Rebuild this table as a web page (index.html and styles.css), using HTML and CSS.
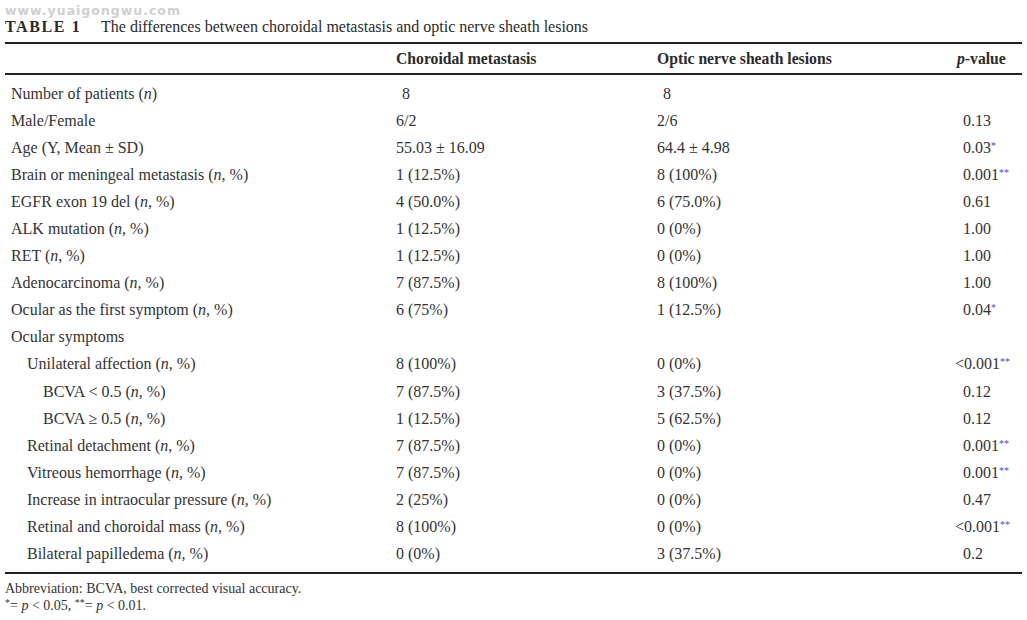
FILE: index.html
```html
<!DOCTYPE html>
<html>
<head>
<meta charset="utf-8">
<link rel="stylesheet" href="styles.css">
</head>
<body>
<div class="page">
  <div class="watermark">www.yuaigongwu.com</div>
  <div class="caption"><span class="label">TABLE 1</span><span class="title">The differences between choroidal metastasis and optic nerve sheath lesions</span></div>
  <table class="data">
    <colgroup>
      <col class="c1"><col class="c2"><col class="c3"><col class="c4">
    </colgroup>
    <thead>
      <tr><th></th><th>Choroidal metastasis</th><th>Optic nerve sheath lesions</th><th class="ph"><i>p</i>-value</th></tr>
    </thead>
    <tbody>
      <tr class="first"><td>Number of patients (<i>n</i>)</td><td><span class="pad">8</span></td><td><span class="pad">8</span></td><td class="p"></td></tr>
      <tr><td>Male/Female</td><td>6/2</td><td>2/6</td><td class="p">0.13</td></tr>
      <tr><td>Age (Y, Mean ± SD)</td><td>55.03 ± 16.09</td><td>64.4 ± 4.98</td><td class="p">0.03<sup>*</sup></td></tr>
      <tr><td>Brain or meningeal metastasis (<i>n</i>, %)</td><td>1 (12.5%)</td><td>8 (100%)</td><td class="p">0.001<sup>**</sup></td></tr>
      <tr><td>EGFR exon 19 del (<i>n</i>, %)</td><td>4 (50.0%)</td><td>6 (75.0%)</td><td class="p">0.61</td></tr>
      <tr><td>ALK mutation (<i>n</i>, %)</td><td>1 (12.5%)</td><td>0 (0%)</td><td class="p">1.00</td></tr>
      <tr><td>RET (<i>n</i>, %)</td><td>1 (12.5%)</td><td>0 (0%)</td><td class="p">1.00</td></tr>
      <tr><td>Adenocarcinoma (<i>n</i>, %)</td><td>7 (87.5%)</td><td>8 (100%)</td><td class="p">1.00</td></tr>
      <tr><td>Ocular as the first symptom (<i>n</i>, %)</td><td>6 (75%)</td><td>1 (12.5%)</td><td class="p">0.04<sup>*</sup></td></tr>
      <tr><td>Ocular symptoms</td><td></td><td></td><td class="p"></td></tr>
      <tr><td class="i1">Unilateral affection (<i>n</i>, %)</td><td>8 (100%)</td><td>0 (0%)</td><td class="p"><span class="lt">&lt;</span>0.001<sup>**</sup></td></tr>
      <tr><td class="i2">BCVA &lt; 0.5 (<i>n</i>, %)</td><td>7 (87.5%)</td><td>3 (37.5%)</td><td class="p">0.12</td></tr>
      <tr><td class="i2">BCVA ≥ 0.5 (<i>n</i>, %)</td><td>1 (12.5%)</td><td>5 (62.5%)</td><td class="p">0.12</td></tr>
      <tr><td class="i1">Retinal detachment (<i>n</i>, %)</td><td>7 (87.5%)</td><td>0 (0%)</td><td class="p">0.001<sup>**</sup></td></tr>
      <tr><td class="i1">Vitreous hemorrhage (<i>n</i>, %)</td><td>7 (87.5%)</td><td>0 (0%)</td><td class="p">0.001<sup>**</sup></td></tr>
      <tr><td class="i1">Increase in intraocular pressure (<i>n</i>, %)</td><td>2 (25%)</td><td>0 (0%)</td><td class="p">0.47</td></tr>
      <tr><td class="i1">Retinal and choroidal mass (<i>n</i>, %)</td><td>8 (100%)</td><td>0 (0%)</td><td class="p"><span class="lt">&lt;</span>0.001<sup>**</sup></td></tr>
      <tr class="last"><td class="i1">Bilateral papilledema (<i>n</i>, %)</td><td>0 (0%)</td><td>3 (37.5%)</td><td class="p">0.2</td></tr>
    </tbody>
  </table>
  <div class="notes">
    <div>Abbreviation: BCVA, best corrected visual accuracy.</div>
    <div><sup>*</sup>= <i>p</i> &lt; 0.05, <sup>**</sup>= <i>p</i> &lt; 0.01.</div>
  </div>
</div>
</body>
</html>
```
FILE: styles.css
```css
html, body {
  margin: 0;
  padding: 0;
  background: #ffffff;
}
.page {
  padding: 0 5px;
  font-family: "Liberation Serif", "Times New Roman", serif;
  color: #333333;
  font-size: 16px;
}
.watermark {
  font-family: "DejaVu Sans", sans-serif;
  font-weight: bold;
  font-size: 12.5px;
  letter-spacing: 1px;
  color: #cfcfcf;
  height: 16px;
  line-height: 16px;
  padding-top: 3px;
}
.caption {
  height: 23px;
  line-height: 16px;
  font-size: 16px;
  color: #2b2b2b;
}
.caption .label {
  font-weight: bold;
  letter-spacing: 1.6px;
  display: inline-block;
  width: 96px;
}
.data {
  width: 100%;
  border-collapse: collapse;
  table-layout: fixed;
  border-top: 2px solid #222;
  border-bottom: 2px solid #222;
}
.c1 { width: 391px; }
.c2 { width: 261px; }
.c3 { width: 300px; }
.c4 { width: 65px; }
.data th {
  font-weight: bold;
  font-size: 15.7px;
  text-align: left;
  height: 29px;
  padding: 0;
  border-bottom: 2px solid #222;
  color: #2b2b2b;
}
.data td {
  height: 27.1px;
  padding: 0;
  white-space: nowrap;
}
.data td:first-child {
  padding-left: 6px;
}
.data tr.first td {
  padding-top: 5px;
}
.data tr.last td {
  padding-bottom: 4px;
}
.data td.i1 { padding-left: 22px; }
.data td.i2 { padding-left: 38px; }
.data td.p {
  padding-left: 6px;
}
.lt {
  display: inline-block;
  margin-left: -8px;
}
.pad {
  padding-left: 6px;
}
sup {
  color: #4b4bd6;
  font-size: 10px;
  vertical-align: 4px;
  line-height: 0;
}
.notes sup {
  color: #333;
}
.notes {
  font-size: 14px;
  line-height: 17px;
  padding-top: 6px;
}
```
